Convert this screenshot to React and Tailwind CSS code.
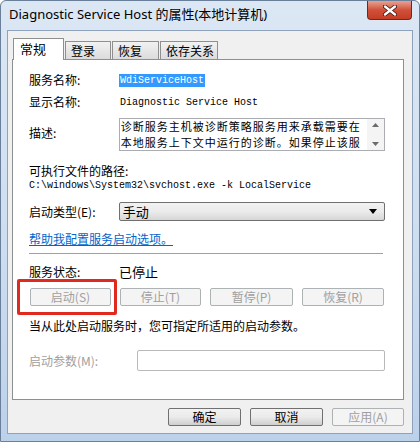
import React from "react";

const cjk = { fontFamily: '"Noto Sans CJK SC", "Noto Sans", sans-serif' };
const mono = { fontFamily: '"Liberation Mono", "Noto Sans CJK SC", monospace' };

function Tab({ label, active, width }) {
  if (active) {
    return (
      <div
        className={`relative z-10 -mb-px h-[22px] ${width} border border-b-0 border-[#8e8f8f] bg-white pl-[6px] pt-[1px] text-[13px] leading-[18px] text-black`}
      >
        {label}
      </div>
    );
  }
  return (
    <div
      className={`mt-[3px] h-[18px] ${width} border border-b-0 border-[#8e8f8f] bg-gradient-to-b from-[#f2f2f2] to-[#dcdcdc] pl-[5px] text-[12px] leading-[17px] text-black`}
    >
      {label}
    </div>
  );
}

function SmallButton({ label, width, disabled }) {
  return (
    <div
      className={`flex h-[18px] ${width} items-center justify-center rounded-[2px] border text-[12px] ${
        disabled
          ? "border-[#adb2b5] bg-[#f4f4f4] text-[#a0a0a0]"
          : "border-[#707070] bg-gradient-to-b from-[#f2f2f2] via-[#ebebeb] to-[#cfcfcf] text-black"
      }`}
    >
      {label}
    </div>
  );
}

export default function App() {
  return (
    <div className="h-[442px] w-[420px] overflow-hidden bg-white" style={cjk}>
      <div className="flex h-[442px] w-[420px] flex-col rounded-t-[6px] border border-[#6a7f99] bg-gradient-to-b from-[#dce7f4] via-[#cfdff0] to-[#bcd1ea]">
        {/* title bar */}
        <div className="flex h-[29px] shrink-0 items-start justify-between">
          <div
            className="pl-[8px] pt-[5px] text-[13px] leading-[16px] text-black"
            style={{ fontFamily: '"Noto Sans", "Noto Sans CJK SC", sans-serif' }}
          >
            Diagnostic Service Host 的属性(本地计算机)
          </div>
          <div className="mr-[7px] flex h-[19px] w-[45px] items-center justify-center rounded-b-[4px] border border-t-0 border-[#6b2a20] bg-gradient-to-b from-[#e8a193] via-[#d0503a] to-[#c63c24]">
            <svg width="14" height="11" viewBox="0 0 14 11">
              <path
                d="M2 1.5 L12 9.5 M12 1.5 L2 9.5"
                stroke="#3b1510"
                strokeWidth="4"
                strokeLinecap="round"
              />
              <path
                d="M2 1.5 L12 9.5 M12 1.5 L2 9.5"
                stroke="#ffffff"
                strokeWidth="2.4"
                strokeLinecap="round"
              />
            </svg>
          </div>
        </div>

        {/* client area */}
        <div className="mx-[6px] flex h-[404px] flex-col border border-[#8ea2bb] bg-[#f0f0f0] pl-[4px] pr-[8px] pt-[6px]">
          {/* tabs */}
          <div className="flex h-[22px] items-end gap-[1px] pl-[1px]">
            <Tab label="常规" active width="w-[51px]" />
            <Tab label="登录" width="w-[46px]" />
            <Tab label="恢复" width="w-[47px]" />
            <Tab label="依存关系" width="w-[58px]" />
          </div>

          {/* panel */}
          <div className="relative flex h-[341px] flex-col border border-[#8e8f8f] bg-white pl-[16px] pr-[18px] text-[12px] text-black">
            <div className="mt-[13px] flex h-[14px] items-center">
              <div className="w-[90px]">服务名称:</div>
              <div className="bg-[#3399ff] px-px text-[10px] leading-[13px] text-white" style={mono}>
                WdiServiceHost
              </div>
            </div>

            <div className="mt-[8px] flex h-[14px] items-center">
              <div className="w-[90px]">显示名称:</div>
              <div className="pl-px text-[10px]" style={mono}>
                Diagnostic Service Host
              </div>
            </div>

            <div className="mt-[9px] flex">
              <div className="w-[90px] pt-[6px]">描述:</div>
              <div className="flex h-[33px] w-[267px] border border-[#abadb3]">
                <div className="flex-1 pl-px text-[11px] leading-[15.5px] tracking-[1px]">
                  <div>诊断服务主机被诊断策略服务用来承载需要在</div>
                  <div>本地服务上下文中运行的诊断。如果停止该服</div>
                </div>
                <div className="flex w-[17px] flex-col items-center justify-between bg-[#f4f4f4] py-[4px]">
                  <svg width="7" height="4" viewBox="0 0 7 4">
                    <path d="M0 4 L3.5 0 L7 4 Z" fill="#6b6b6b" />
                  </svg>
                  <svg width="7" height="4" viewBox="0 0 7 4">
                    <path d="M0 0 L3.5 4 L7 0 Z" fill="#6b6b6b" />
                  </svg>
                </div>
              </div>
            </div>

            <div className="mt-[13px] h-[14px] leading-[14px]">可执行文件的路径:</div>
            <div className="mt-px h-[14px] text-[10px] leading-[14px]" style={mono}>
              C:\windows\System32\svchost.exe -k LocalService
            </div>

            <div className="mt-[9px] flex h-[19px] items-center">
              <div className="w-[90px]">启动类型(E):</div>
              <div className="flex h-[19px] w-[267px] items-center justify-between rounded-[2px] border border-[#707070] bg-gradient-to-b from-[#f2f2f2] via-[#ebebeb] to-[#d6d6d6] pl-[3px] pr-[7px]">
                <span className="text-[13px]">手动</span>
                <svg width="8" height="5" viewBox="0 0 8 5">
                  <path d="M0 0 L8 0 L4 5 Z" fill="#000" />
                </svg>
              </div>
            </div>

            <div className="mt-[11px] h-[14px] leading-[14px]">
              <span className="text-[#0066cc] underline">帮助我配置服务启动选项。</span>
            </div>

            <div className="mt-[7px] h-px w-[354px] bg-[#a0a0a0]" />

            <div className="mt-[11px] flex h-[14px] items-center">
              <div className="w-[90px]">服务状态:</div>
              <div className="text-[13px]">已停止</div>
            </div>

            <div className="mt-[9px] flex h-[18px] items-center gap-[9px] pl-px">
              <SmallButton label="启动(S)" width="w-[81px]" disabled />
              <SmallButton label="停止(T)" width="w-[81px]" disabled />
              <SmallButton label="暂停(P)" width="w-[83px]" disabled />
              <SmallButton label="恢复(R)" width="w-[82px]" disabled />
            </div>

            <div className="mt-[13px] h-[14px] leading-[14px]">当从此处启动服务时，您可指定所适用的启动参数。</div>

            <div className="mt-[17px] flex h-[21px] items-center">
              <div className="w-[108px] text-[#a0a0a0]">启动参数(M):</div>
              <div className="h-[21px] w-[249px] rounded-[2px] border border-[#b9b9b9] bg-white" />
            </div>

            {/* annotation highlight */}
            <div className="absolute left-[4px] top-[219px] h-[36px] w-[100px] rounded-[2px] border-[3px] border-[#e02a20]" />
          </div>

          {/* dialog buttons */}
          <div className="mt-[8px] flex justify-end gap-[9px]">
            <SmallButton label="确定" width="w-[73px]" />
            <SmallButton label="取消" width="w-[73px]" />
            <SmallButton label="应用(A)" width="w-[72px]" disabled />
          </div>
        </div>
      </div>
    </div>
  );
}
